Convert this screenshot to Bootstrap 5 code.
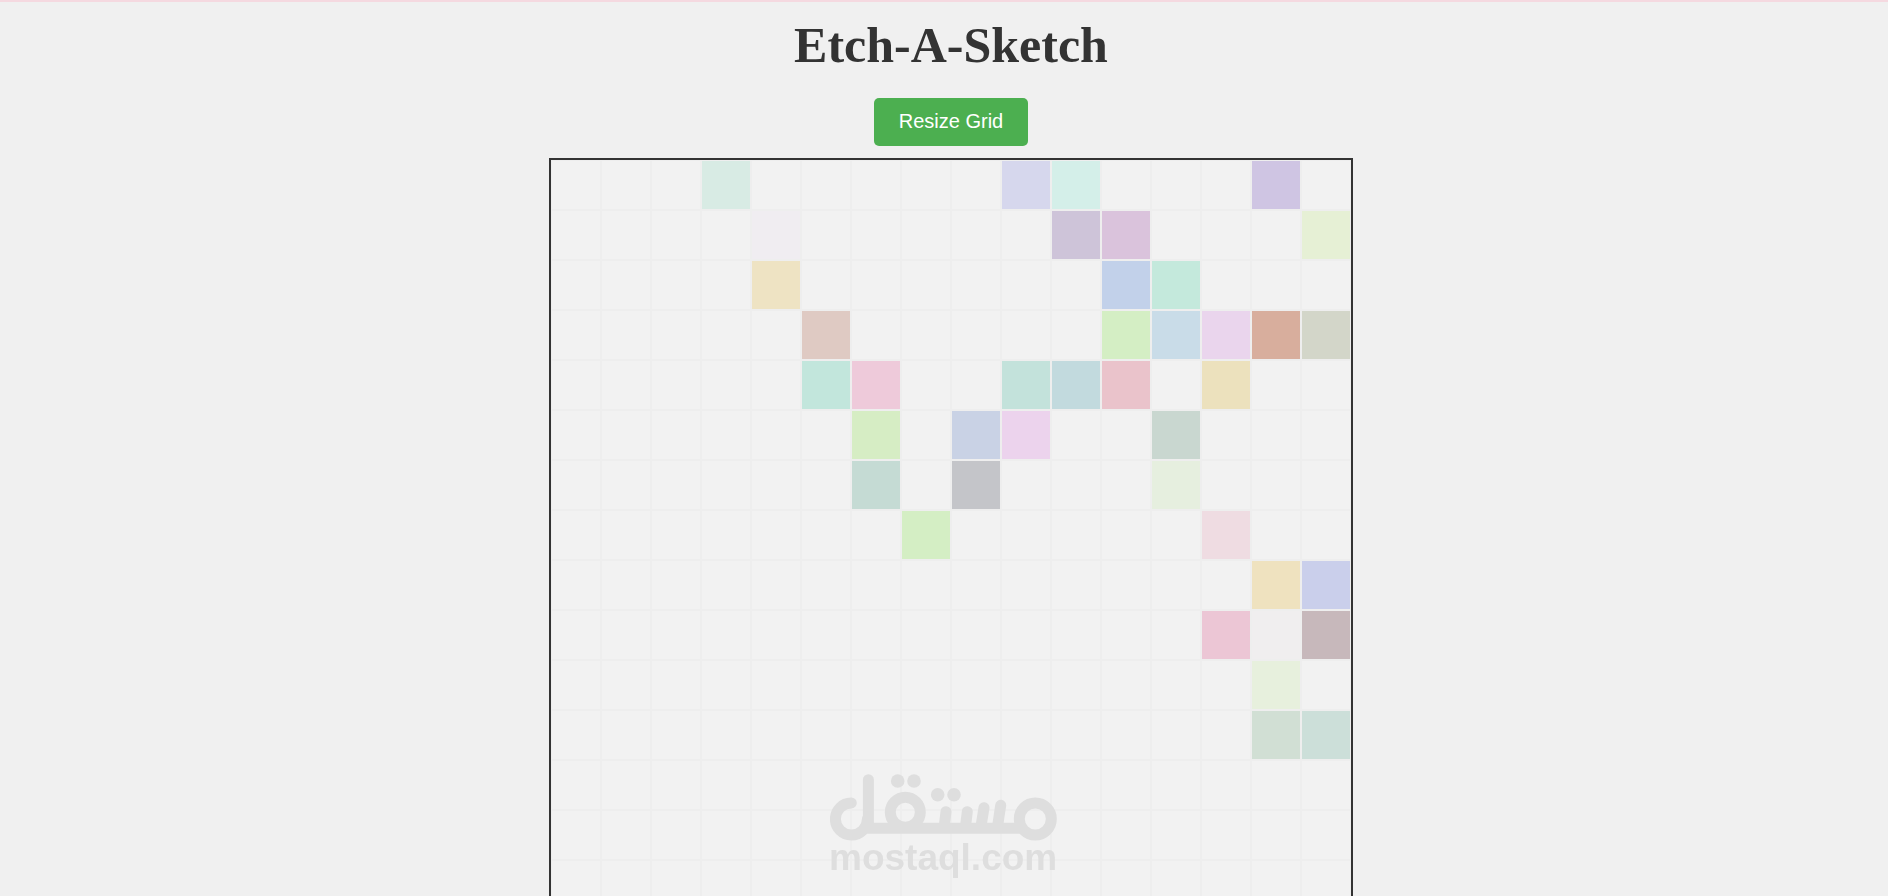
<!DOCTYPE html>
<html lang="en">
<head>
<meta charset="utf-8">
<meta name="viewport" content="width=device-width, initial-scale=1">
<title>Etch-A-Sketch</title>
<link href="https://cdn.jsdelivr.net/npm/bootstrap@5.3.0/dist/css/bootstrap.min.css" rel="stylesheet">
<style>
  html { scrollbar-width: none; }
  body { background: #f0f0f0; color: #333; border-top: 2px solid #f5d9e0; padding-left: 14px; font-family: "Liberation Sans", Arial, sans-serif; }
  h1 { font: bold 50px/58px "Liberation Serif", "Times New Roman", serif; margin: 14px 0 24px; }
  .btn-resize { --bs-btn-color: #fff; --bs-btn-bg: #4caf50; --bs-btn-border-width: 0; --bs-btn-hover-color: #fff; --bs-btn-hover-bg: #45a049; --bs-btn-border-radius: 5px; padding: 11px 25px 13px; font-size: 20px; line-height: 24px; margin-bottom: 12px; }
  .sketch { display: grid; grid-template-columns: repeat(16, 1fr); width: 100%; max-width: 804px; border: 2px solid #333; background: #f2f2f2; }
  .pixel { aspect-ratio: 1; border: 1px solid #eee; background-clip: padding-box; }
  .watermark { pointer-events: none; }
  .watermark text { font: bold 37px "Liberation Sans", Arial, sans-serif; }
</style>
</head>
<body>
<main class="d-flex flex-column align-items-center">
  <h1>Etch-A-Sketch</h1>
  <button type="button" class="btn btn-resize">Resize Grid</button>
  <div class="sketch" id="sketch"></div>
</main>
<svg class="watermark position-fixed bottom-0 start-50 translate-middle-x" width="228" height="124" viewBox="0 0 228 124" role="img" aria-label="mostaql.com">
  <g fill="none" stroke="#dedede" stroke-width="11" stroke-linecap="round" stroke-linejoin="round">
    <circle cx="205.3" cy="47" r="16"/>
    <circle cx="75.3" cy="40.3" r="15"/>
    <path d="M21.3 31A16 16 0 1 0 37.4 47M38.4 7.700V56.300H190M116 39.700 114 56.300M137.300 39.700 135.300 56.300M154 35.700 150.700 56.300M170.700 33.300 167.300 56.300"/>
  </g>
  <g fill="#dedede">
    <circle cx="67.7" cy="9" r="6.800"/><circle cx="84" cy="9" r="6.800"/>
    <circle cx="107.7" cy="22.700" r="6.800"/><circle cx="124" cy="22.700" r="6.800"/>
    <text x="-1" y="98">mostaql.com</text>
  </g>
</svg>
<script src="https://cdn.jsdelivr.net/npm/bootstrap@5.3.0/dist/js/bootstrap.bundle.min.js"></script>
<script>
  // Painted squares: row -> { column: colour }
  const painted = {
    0: { 3: '#d8ebe4', 9: '#d6d7ed', 10: '#d4efe9', 14: '#cfc5e3' },
    1: { 4: '#f0edf1', 10: '#cec4d9', 11: '#dac3dc', 15: '#e6f0d5' },
    2: { 4: '#eee3c3', 11: '#c2d1ea', 12: '#c4e9dc' },
    3: { 5: '#dfcac3', 11: '#d4eec4', 12: '#c9dce8', 13: '#ead5ed', 14: '#d8ae9d', 15: '#d3d6c9' },
    4: { 5: '#c2e6dc', 6: '#eecada', 9: '#c3e2db', 10: '#c2dade', 11: '#eac3cb', 13: '#ece1bd' },
    5: { 6: '#d6edc4', 8: '#c9d2e5', 9: '#ecd3ed', 12: '#c9d7d0' },
    6: { 6: '#c5dbd4', 8: '#c4c5c9', 12: '#e6efdf' },
    7: { 7: '#d4eec4', 13: '#efdce2' },
    8: { 14: '#efe2bf', 15: '#cacfeb' },
    9: { 13: '#ecc6d5', 14: '#f0eeef', 15: '#c7b8bb' },
    10: { 14: '#e7f0dd' },
    11: { 14: '#d1dfd4', 15: '#ccdfd9' }
  };
  const sketch = document.getElementById('sketch');
  for (let row = 0; row < 16; row++) {
    for (let col = 0; col < 16; col++) {
      const pixel = document.createElement('div');
      pixel.className = 'pixel';
      const colour = painted[row] && painted[row][col];
      if (colour) pixel.style.backgroundColor = colour;
      pixel.addEventListener('mouseenter', () => {
        pixel.style.backgroundColor = `hsl(${Math.floor(Math.random() * 360)} 50% 85%)`;
      });
      sketch.appendChild(pixel);
    }
  }
</script>
</body>
</html>
